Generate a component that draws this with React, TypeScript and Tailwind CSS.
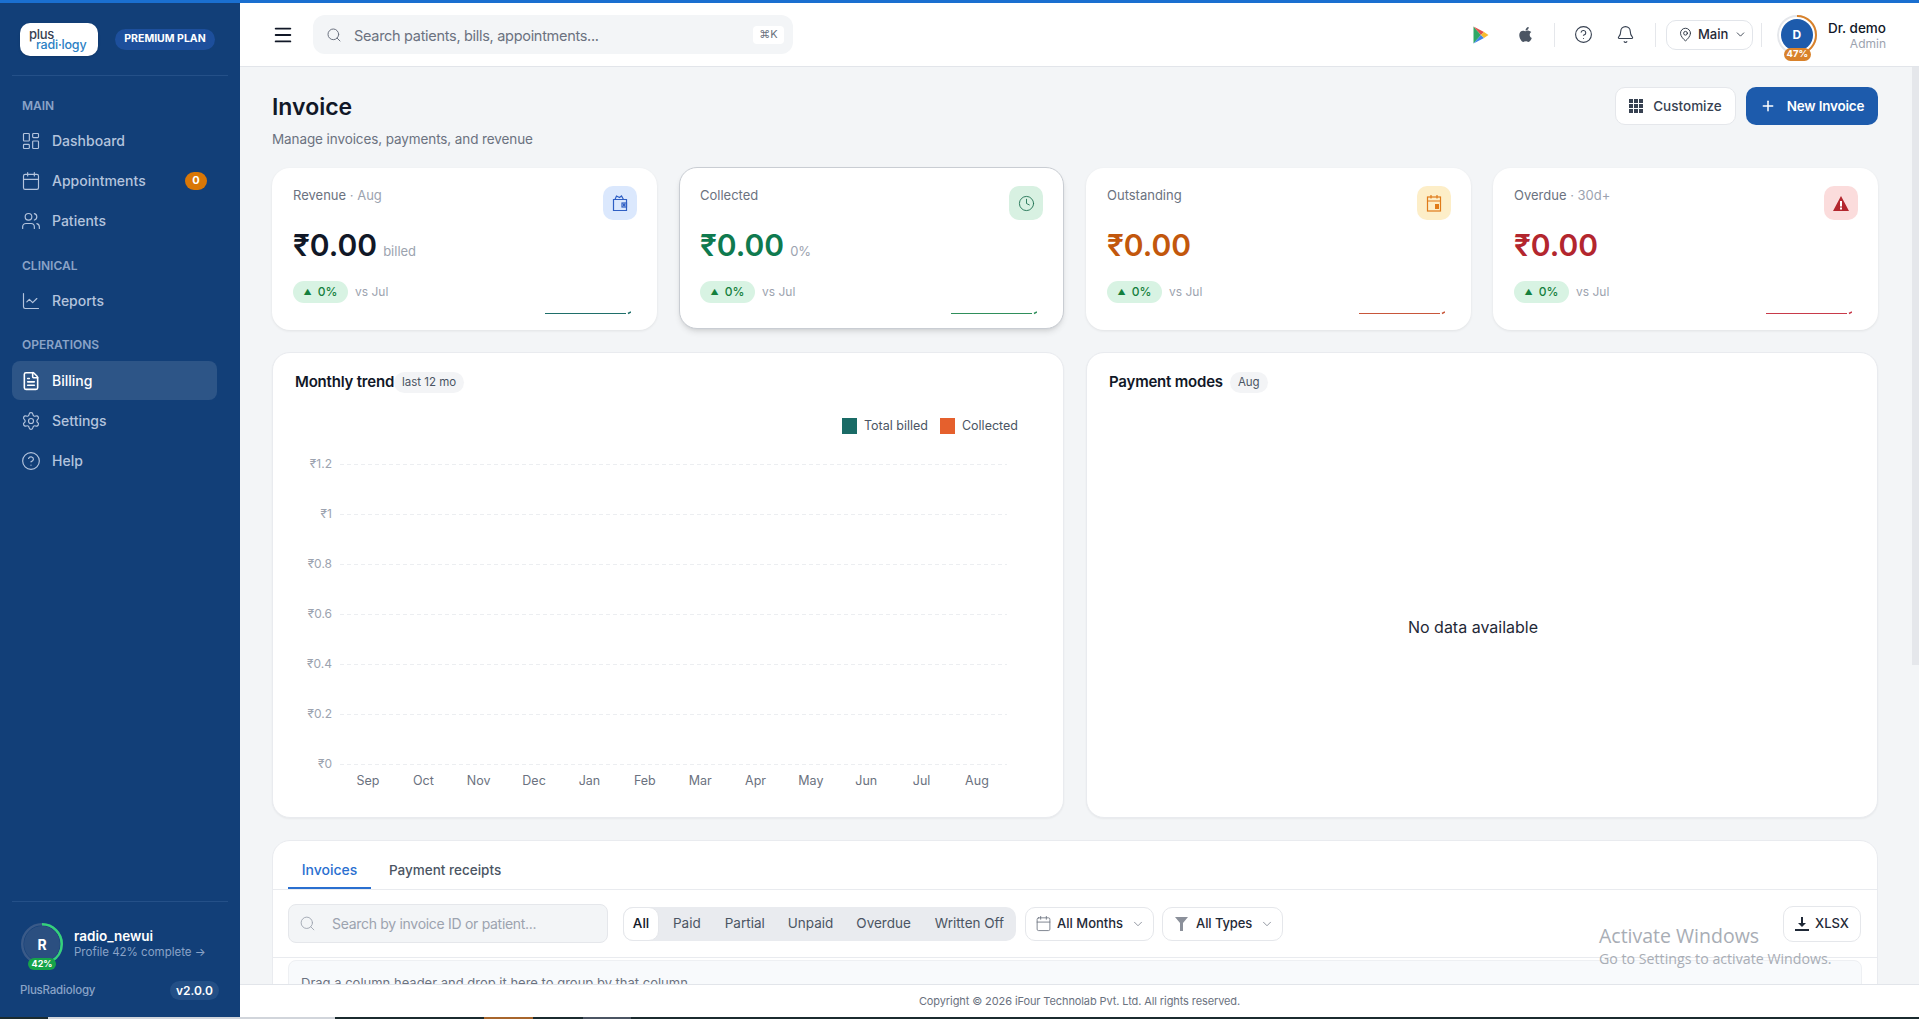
import {
  Bell,
  Calendar,
  ChartLine,
  ChevronDown,
  CircleHelp,
  Clock,
  FileText,
  LayoutDashboard,
  MapPin,
  Menu,
  Plus,
  Search,
  Settings,
  Users,
} from 'lucide-react';
import { FaApple } from 'react-icons/fa';
import type { ReactNode } from 'react';

const months = ['Sep', 'Oct', 'Nov', 'Dec', 'Jan', 'Feb', 'Mar', 'Apr', 'May', 'Jun', 'Jul', 'Aug'];
const yTicks = ['₹1.2', '₹1', '₹0.8', '₹0.6', '₹0.4', '₹0.2', '₹0'];

function WalletIcon() {
  return (
    <svg width="16" height="18" viewBox="0 0 16 18" fill="none" stroke="#2f5fc4" strokeWidth="1.2">
      <path d="M1.5 5.5h13v11h-13z" />
      <path d="M3 5.5 4.5 2l3 1.5L9.5 2l2 3.5" />
      <rect x="10" y="9" width="4.5" height="4" />
      <circle cx="12.2" cy="11" r="0.8" fill="#2f5fc4" />
    </svg>
  );
}

function CalendarBlockIcon() {
  return (
    <svg width="16" height="18" viewBox="0 0 16 18" fill="none" stroke="#e07b1a" strokeWidth="1.2">
      <rect x="1.5" y="3" width="13" height="14" />
      <path d="M1.5 7h13M5 1v3.5M11 1v3.5" />
      <rect x="9" y="10" width="4" height="5" fill="#e07b1a" stroke="none" />
    </svg>
  );
}

function WarningIcon() {
  return (
    <svg width="18" height="17" viewBox="0 0 18 17">
      <path d="M9 1 17 16H1z" fill="#b3262e" />
      <rect x="8" y="6" width="2" height="5.5" fill="#fff" />
      <rect x="8" y="12.5" width="2" height="2" fill="#fff" />
    </svg>
  );
}

function PlayStoreIcon() {
  return (
    <svg width="16" height="18" viewBox="0 0 16 18">
      <polygon points="0.5,0.5 0.5,17.5 8,9" fill="#2fa866" />
      <polygon points="0.5,0.5 8,9 11,6" fill="#e2514a" />
      <polygon points="0.5,17.5 8,9 11,12" fill="#3f83e8" />
      <polygon points="11,6 15.5,9 11,12 8,9" fill="#f7bb2e" />
    </svg>
  );
}

function GridIcon() {
  return (
    <svg width="14" height="14" viewBox="0 0 14 14" fill="#374151">
      <rect x="0" y="0" width="4" height="4" />
      <rect x="5" y="0" width="4" height="4" />
      <rect x="10" y="0" width="4" height="4" />
      <rect x="0" y="5" width="4" height="4" />
      <rect x="5" y="5" width="4" height="4" />
      <rect x="10" y="5" width="4" height="4" />
      <rect x="0" y="10" width="4" height="4" />
      <rect x="5" y="10" width="4" height="4" />
      <rect x="10" y="10" width="4" height="4" />
    </svg>
  );
}

function Ring({ size, percent, track, color, stroke }: { size: number; percent: number; track: string; color: string; stroke: number }) {
  const r = (size - stroke) / 2;
  const c = 2 * Math.PI * r;
  return (
    <svg width={size} height={size} className="absolute inset-0 -rotate-90">
      <circle cx={size / 2} cy={size / 2} r={r} fill="none" stroke={track} strokeWidth={stroke} />
      <circle cx={size / 2} cy={size / 2} r={r} fill="none" stroke={color} strokeWidth={stroke} strokeDasharray={`${(c * percent) / 100} ${c}`} />
    </svg>
  );
}

function NavItem({ icon, label, active, badge }: { icon: ReactNode; label: string; active?: boolean; badge?: string }) {
  return (
    <div
      className={`mb-px flex h-[39px] w-[205px] items-center gap-[11px] rounded-lg pl-[9px] pr-[10px] text-[14px] font-medium ${
        active ? 'bg-[#2d5587] text-white' : 'text-[#b4c4dd]'
      }`}
    >
      {icon}
      <span className="flex-1">{label}</span>
      {badge && (
        <span className="flex h-[18px] w-[22px] items-center justify-center rounded-full bg-[#d97706] text-[11px] font-bold text-white">
          {badge}
        </span>
      )}
    </div>
  );
}

function SectionLabel({ children }: { children: ReactNode }) {
  return <div className="pl-[22px] text-[12px] font-semibold leading-[16px] text-[#8aa3c7]">{children}</div>;
}

function Sidebar() {
  return (
    <aside className="flex h-full w-60 shrink-0 flex-col bg-[#123f78]">
      <div className="mx-3 flex h-[73px] shrink-0 items-center gap-[17px] border-b border-[#245088] pl-2">
        <div className="flex h-[33px] w-[78px] flex-col justify-center rounded-[10px] bg-white pl-[9px] shadow-sm">
          <span className="text-[13px] font-medium leading-[10px] tracking-[-0.3px] text-[#374151]">plus</span>
          <span className="pl-[7px] text-[12.5px] font-medium leading-[11px] tracking-[-0.2px] text-[#2b7fc4]">radi·logy</span>
        </div>
        <div className="flex h-[21px] w-[100px] items-center justify-center rounded-full bg-[#1d4f9c] text-[10.5px] font-bold text-white">
          PREMIUM PLAN
        </div>
      </div>

      <div className="flex-1 pl-3 pt-[22px]">
        <div className="-ml-3">
          <SectionLabel>MAIN</SectionLabel>
        </div>
        <div className="mt-[7px]">
          <NavItem icon={<LayoutDashboard size={20} strokeWidth={1.4} />} label="Dashboard" />
          <NavItem icon={<Calendar size={20} strokeWidth={1.4} />} label="Appointments" badge="0" />
          <NavItem icon={<Users size={20} strokeWidth={1.4} />} label="Patients" />
        </div>
        <div className="-ml-3 mt-[18px]">
          <SectionLabel>CLINICAL</SectionLabel>
        </div>
        <div className="mt-[7px]">
          <NavItem icon={<ChartLine size={20} strokeWidth={1.4} />} label="Reports" />
        </div>
        <div className="-ml-3 mt-[17px]">
          <SectionLabel>OPERATIONS</SectionLabel>
        </div>
        <div className="mt-[8px]">
          <NavItem icon={<FileText size={20} strokeWidth={1.9} />} label="Billing" active />
          <NavItem icon={<Settings size={20} strokeWidth={1.4} />} label="Settings" />
          <NavItem icon={<CircleHelp size={20} strokeWidth={1.4} />} label="Help" />
        </div>
      </div>

      <div className="mx-3 h-[116px] shrink-0 border-t border-[#245088] pt-[21px]">
        <div className="flex items-center gap-[11px] pl-[9px]">
          <div className="relative h-[42px] w-[42px] shrink-0">
            <Ring size={42} percent={42} track="#3a5a88" color="#34d27b" stroke={2.5} />
            <div className="absolute inset-[3px] flex items-center justify-center rounded-full bg-[#2b4f80] text-[14px] font-bold text-white">R</div>
            <div className="absolute bottom-[-5px] left-[7px] flex h-[12px] w-[28px] items-center justify-center rounded-full bg-[#16a34a] text-[9px] font-bold text-white">
              42%
            </div>
          </div>
          <div>
            <div className="text-[13.5px] font-semibold leading-[17px] text-white">radio_newui</div>
            <div className="text-[11.5px] leading-[15px] text-[#8aa3c7]">Profile 42% complete →</div>
          </div>
        </div>
        <div className="mt-[16px] flex items-center justify-between pl-2 pr-[9px]">
          <span className="text-[11.5px] font-medium tracking-[-0.2px] text-[#8aa3c7]">PlusRadiology</span>
          <span className="flex h-[19px] w-[49px] items-center justify-center rounded-full bg-[#234f86] text-[12px] font-semibold text-white">v2.0.0</span>
        </div>
      </div>
    </aside>
  );
}

function Header() {
  return (
    <header className="flex h-[64px] shrink-0 items-center border-b border-[#e2e5ea] bg-white pl-[32px] pr-[33px]">
      <Menu size={22} strokeWidth={2} className="text-[#111827]" />
      <div className="ml-[19px] flex h-[39px] w-[480px] items-center rounded-xl bg-[#f3f5f7] pl-[13px] pr-[9px]">
        <Search size={16} strokeWidth={1.5} className="text-[#6b7280]" />
        <span className="ml-[12px] flex-1 pt-[2px] text-[14.5px] tracking-[-0.3px] text-[#6b7280]">Search patients, bills, appointments...</span>
        <span className="flex h-[18px] w-[31px] items-center justify-center rounded bg-white text-[11px] text-[#6b7280]">⌘K</span>
      </div>
      <div className="ml-auto flex items-center">
        <PlayStoreIcon />
        <FaApple size={17} className="ml-[28px] text-[#4b5563]" />
        <div className="ml-[20px] h-6 w-px bg-[#e5e7eb]" />
        <CircleHelp size={19} strokeWidth={1.4} className="ml-[19px] text-[#374151]" />
        <Bell size={19} strokeWidth={1.4} className="ml-[23px] text-[#374151]" />
        <div className="ml-[20px] h-6 w-px bg-[#e5e7eb]" />
        <div className="ml-[10px] flex h-[30px] w-[87px] items-center rounded-[10px] border border-[#e2e5ea] pl-[11px] text-[13px] font-medium text-[#1f2937]">
          <MapPin size={15} strokeWidth={1.4} />
          <span className="ml-[5px]">Main</span>
          <ChevronDown size={13} strokeWidth={1.5} className="ml-[6px]" />
        </div>
        <div className="ml-[8px] h-6 w-px bg-[#e5e7eb]" />
        <div className="relative ml-[15px] h-[40px] w-[40px]">
          <Ring size={40} percent={47} track="#e5e7eb" color="#d9822b" stroke={2} />
          <div className="absolute inset-[4px] flex items-center justify-center rounded-full bg-[#1d5bac] text-[12px] font-bold text-white">D</div>
          <div className="absolute bottom-[-6px] left-[7px] flex h-[13px] w-[27px] items-center justify-center rounded-full bg-[#d9822b] text-[9.5px] font-bold text-white">
            47%
          </div>
        </div>
        <div className="ml-[11px] pt-[1px] text-right">
          <div className="text-[13.5px] font-medium leading-[16px] text-[#111827]">Dr. demo</div>
          <div className="text-[12px] leading-[15px] text-[#9ca3af]">Admin</div>
        </div>
      </div>
    </header>
  );
}

function Stat({
  label,
  suffix,
  color,
  iconBg,
  icon,
  note,
  spark,
  hovered,
}: {
  label: string;
  suffix?: string;
  color: string;
  iconBg: string;
  icon: ReactNode;
  note?: string;
  spark: string;
  hovered?: boolean;
}) {
  return (
    <div
      className={`h-[162px] rounded-[18px] bg-white pr-5 pt-[18px] ${
        hovered ? '-translate-y-[1px] border border-[#c9cdd3] pl-5 shadow-md' : 'pl-[21px] shadow-[0_1px_3px_rgba(0,0,0,0.08)]'
      }`}
    >
      <div className="flex items-start justify-between">
        <div className="text-[13px] leading-[18px] text-[#6b7280]">
          {label}
          {suffix && <span className="text-[#9ca3af]"> · {suffix}</span>}
        </div>
        <div className={`flex h-[34px] w-[34px] items-center justify-center rounded-[10px] ${iconBg}`}>{icon}</div>
      </div>
      <div className="mt-[7px] flex h-[36px] items-baseline">
        <span className={`text-[30px] font-semibold leading-[36px] ${color}`}>₹0.00</span>
        {note && <span className="ml-[6px] text-[13px] text-[#9ca3af]">{note}</span>}
      </div>
      <div className="mt-[18px] flex items-center">
        <span className="flex h-[22px] w-[55px] items-center justify-center gap-[6px] rounded-full bg-[#d8f3e3] text-[12px] font-medium text-[#15803d]">
          <span className="text-[8px]">▲</span>0%
        </span>
        <span className="ml-[7px] text-[12px] text-[#9ca3af]">vs Jul</span>
      </div>
      <div className="mt-[7px] flex justify-end pr-[6px]">
        <svg width="86" height="6" viewBox="0 0 86 6" fill="none" stroke={spark}>
          <path d="M0 3.5H81" strokeWidth="1" />
          <path d="M83 3.5 86 2" strokeWidth="1.5" />
        </svg>
      </div>
    </div>
  );
}

function TrendChart() {
  return (
    <svg width="792" height="350" viewBox="0 0 792 350" className="block">
      {yTicks.map((t, i) => (
        <g key={t}>
          <line x1="67" x2="734" y1={23.5 + i * 50} y2={23.5 + i * 50} stroke="#eceef1" strokeDasharray="4 3" />
          <text x="59" y={27 + i * 50} textAnchor="end" fontSize="12" fill="#9ca3af">
            {t}
          </text>
        </g>
      ))}
      {months.map((m, i) => (
        <text key={m} x={95 + i * 55.36} y="344" textAnchor="middle" fontSize="12.5" fill="#6b7280">
          {m}
        </text>
      ))}
    </svg>
  );
}

function ChartTitle({ title, pill, tight }: { title: string; pill: string; tight?: boolean }) {
  return (
    <div className="flex h-[21px] items-center pl-[22px]">
      <span className="text-[15px] font-semibold tracking-[-0.2px] text-[#111827]">{title}</span>
      <span className={`flex h-[21px] items-center rounded-full bg-[#f3f4f6] px-[8px] text-[11.5px] text-[#4b5563] ${tight ? 'ml-0' : 'ml-[7px]'}`}>{pill}</span>
    </div>
  );
}

function InvoiceTable() {
  return (
    <div className="mt-[22px] rounded-t-[18px] border border-[#e9ebef] bg-white">
      <div className="flex h-[49px] items-end border-b border-[#e9ebef] pl-[15px] font-medium">
        <div className="flex h-full w-[83px] items-center justify-center border-b-2 border-[#2a6fd0] pt-[10px] text-[14px] text-[#2a6fd0]">Invoices</div>
        <div className="ml-[18px] flex h-full items-center pt-[10px] text-[13.5px] text-[#4b5563]">Payment receipts</div>
      </div>
      <div className="flex h-[68px] items-center border-b border-[#e9ebef] pl-[15px] pr-4">
        <div className="flex h-[39px] w-[320px] items-center rounded-lg border border-[#e5e7eb] bg-[#f3f5f7] pl-[10px]">
          <Search size={17} strokeWidth={1.25} className="text-[#9ca3af]" />
          <span className="ml-[16px] text-[14px] tracking-[-0.3px] text-[#9ca3af]">Search by invoice ID or patient...</span>
        </div>
        <div className="ml-[15px] flex h-[34px] items-center rounded-[10px] bg-[#e9ebef] text-[13.5px] text-[#4b5563]">
          <span className="flex h-full w-[36px] items-center justify-center rounded-[10px] border border-[#e5e7eb] bg-white font-medium text-[#111827]">All</span>
          <span className="ml-[14px]">Paid</span>
          <span className="ml-[24px]">Partial</span>
          <span className="ml-[23px]">Unpaid</span>
          <span className="ml-[23px]">Overdue</span>
          <span className="ml-[24px] mr-[12px]">Written Off</span>
        </div>
        <div className="ml-[9px] flex h-[34px] w-[129px] items-center rounded-[10px] border border-[#e5e7eb] pl-[9px] text-[13px] font-medium text-[#1f2937]">
          <Calendar size={17} strokeWidth={1.2} className="text-[#6b7280]" />
          <span className="ml-[5px]">All Months</span>
          <ChevronDown size={14} strokeWidth={1.25} className="ml-[8px] text-[#6b7280]" />
        </div>
        <div className="ml-[8px] flex h-[34px] w-[121px] items-center rounded-[10px] border border-[#e5e7eb] pl-[12px] text-[13px] font-medium tracking-[-0.1px] text-[#1f2937]">
          <svg width="13" height="14" viewBox="0 0 13 14" fill="#8b909a">
            <path d="M0 0h13L8 6v8H5V6z" />
          </svg>
          <span className="ml-[8px]">All Types</span>
          <ChevronDown size={14} strokeWidth={1.25} className="ml-[8px] text-[#6b7280]" />
        </div>
        <div className="ml-auto flex h-[36px] w-[78px] items-center justify-center gap-[6px] rounded-[10px] border border-[#e5e7eb] text-[13px] font-medium text-[#1f2937]">
          <svg width="14" height="14" viewBox="0 0 14 14" fill="#1f2937">
            <path d="M6 0h2v6h3L7 10 3 6h3z" />
            <rect x="0" y="12" width="14" height="2" />
          </svg>
          XLSX
        </div>
      </div>
      <div className="mx-[15px] mt-[2px] rounded-t-lg border border-[#eef0f3] bg-[#f8fafc] pl-[12px] pt-[13px] text-[13px] text-[#6b7280]">
        Drag a column header and drop it here to group by that column
      </div>
    </div>
  );
}

export default function App() {
  return (
    <div className="relative flex h-[1019px] w-full flex-col overflow-hidden bg-white [font-family:Inter,sans-serif]">
      <div className="h-[3px] shrink-0 bg-[#1a6fd0]" />
      <div className="flex min-h-0 flex-1">
        <Sidebar />
        <div className="flex min-w-0 flex-1 flex-col">
          <Header />
          <div className="flex min-h-0 flex-1 bg-[#f3f5f7]">
            <main className="min-w-0 flex-1 overflow-hidden pl-8 pr-[34px] pt-[20px]">
              <div className="flex h-[81px] items-start justify-between">
                <div>
                  <h1 className="text-[23px] font-semibold leading-[40px] text-[#111827]">Invoice</h1>
                  <p className="mt-[2px] text-[13.5px] leading-[20px] tracking-[-0.1px] text-[#6b7280]">Manage invoices, payments, and revenue</p>
                </div>
                <div className="flex gap-[10px]">
                  <div className="flex h-[38px] w-[121px] items-center justify-center gap-[10px] rounded-[10px] border border-[#e5e7eb] bg-white text-[13.5px] font-medium text-[#374151]">
                    <GridIcon />
                    Customize
                  </div>
                  <div className="flex h-[38px] w-[132px] items-center justify-center gap-[11px] rounded-[10px] bg-[#1d5bac] text-[13.5px] font-semibold tracking-[-0.2px] text-white">
                    <Plus size={16} strokeWidth={2.25} />
                    New Invoice
                  </div>
                </div>
              </div>

              <div className="grid grid-cols-4 gap-[22px]">
                <Stat label="Revenue" suffix="Aug" color="text-[#111827]" iconBg="bg-[#dbe8fd]" icon={<WalletIcon />} note="billed" spark="#1f6f6a" />
                <Stat label="Collected" color="text-[#0f7a4f]" iconBg="bg-[#d8f1e2]" icon={<Clock size={17} strokeWidth={1.25} className="text-[#1b6f4f]" />} note="0%" spark="#2f8f5b" hovered />
                <Stat label="Outstanding" color="text-[#c2570c]" iconBg="bg-[#fdeec8]" icon={<CalendarBlockIcon />} spark="#c8563a" />
                <Stat label="Overdue" suffix="30d+" color="text-[#b3262e]" iconBg="bg-[#fbdcdc]" icon={<WarningIcon />} spark="#c83a4a" />
              </div>

              <div className="mt-[22px] grid h-[466px] grid-cols-2 gap-[22px]">
                <div className="rounded-[18px] border border-[#e9ebef] bg-white pt-[19px] shadow-[0_1px_2px_rgba(0,0,0,0.05)]">
                  <ChartTitle title="Monthly trend" pill="last 12 mo" tight />
                  <div className="mt-[25px] flex h-[16px] items-center justify-end pr-[45px] text-[12.5px] text-[#4b5563]">
                    <span className="h-[16px] w-[15px] bg-[#1a6b66]" />
                    <span className="ml-[7px]">Total billed</span>
                    <span className="ml-[12px] h-[16px] w-[15px] bg-[#e5602d]" />
                    <span className="ml-[7px]">Collected</span>
                  </div>
                  <div className="mt-[7px]">
                    <TrendChart />
                  </div>
                </div>
                <div className="flex flex-col rounded-[18px] border border-[#e9ebef] bg-white pt-[19px] shadow-[0_1px_2px_rgba(0,0,0,0.05)]">
                  <ChartTitle title="Payment modes" pill="Aug" />
                  <div className="flex flex-1 items-center justify-center pr-[18px] pt-[44px] text-[16px] text-[#1f2937]">No data available</div>
                </div>
              </div>

              <InvoiceTable />
            </main>
            <div className="w-[7px] shrink-0">
              <div className="h-[598px] bg-[#e5e7eb]" />
            </div>
          </div>
          <footer className="flex h-[33px] shrink-0 items-center justify-center border-t border-[#e2e5ea] bg-white text-[11px] tracking-[-0.1px] text-[#6b7280]">
            Copyright © 2026 iFour Technolab Pvt. Ltd. All rights reserved.
          </footer>
        </div>
      </div>
      <div className="flex h-[2px] shrink-0 bg-[#1b2b2f]">
        <div className="ml-[48px] w-[287px] bg-[#d1d5db]" />
        <div className="ml-[149px] w-[49px] bg-[#a8662c]" />
        <div className="ml-[50px] w-[48px] bg-[#4b5563]" />
      </div>
      <div className="pointer-events-none absolute left-[1599px] top-[923px] text-[#a8adb5] [font-family:'Open_Sans',sans-serif]">
        <div className="text-[19.5px] leading-[26px]">Activate Windows</div>
        <div className="text-[14.2px] leading-[20px]">Go to Settings to activate Windows.</div>
      </div>
    </div>
  );
}
